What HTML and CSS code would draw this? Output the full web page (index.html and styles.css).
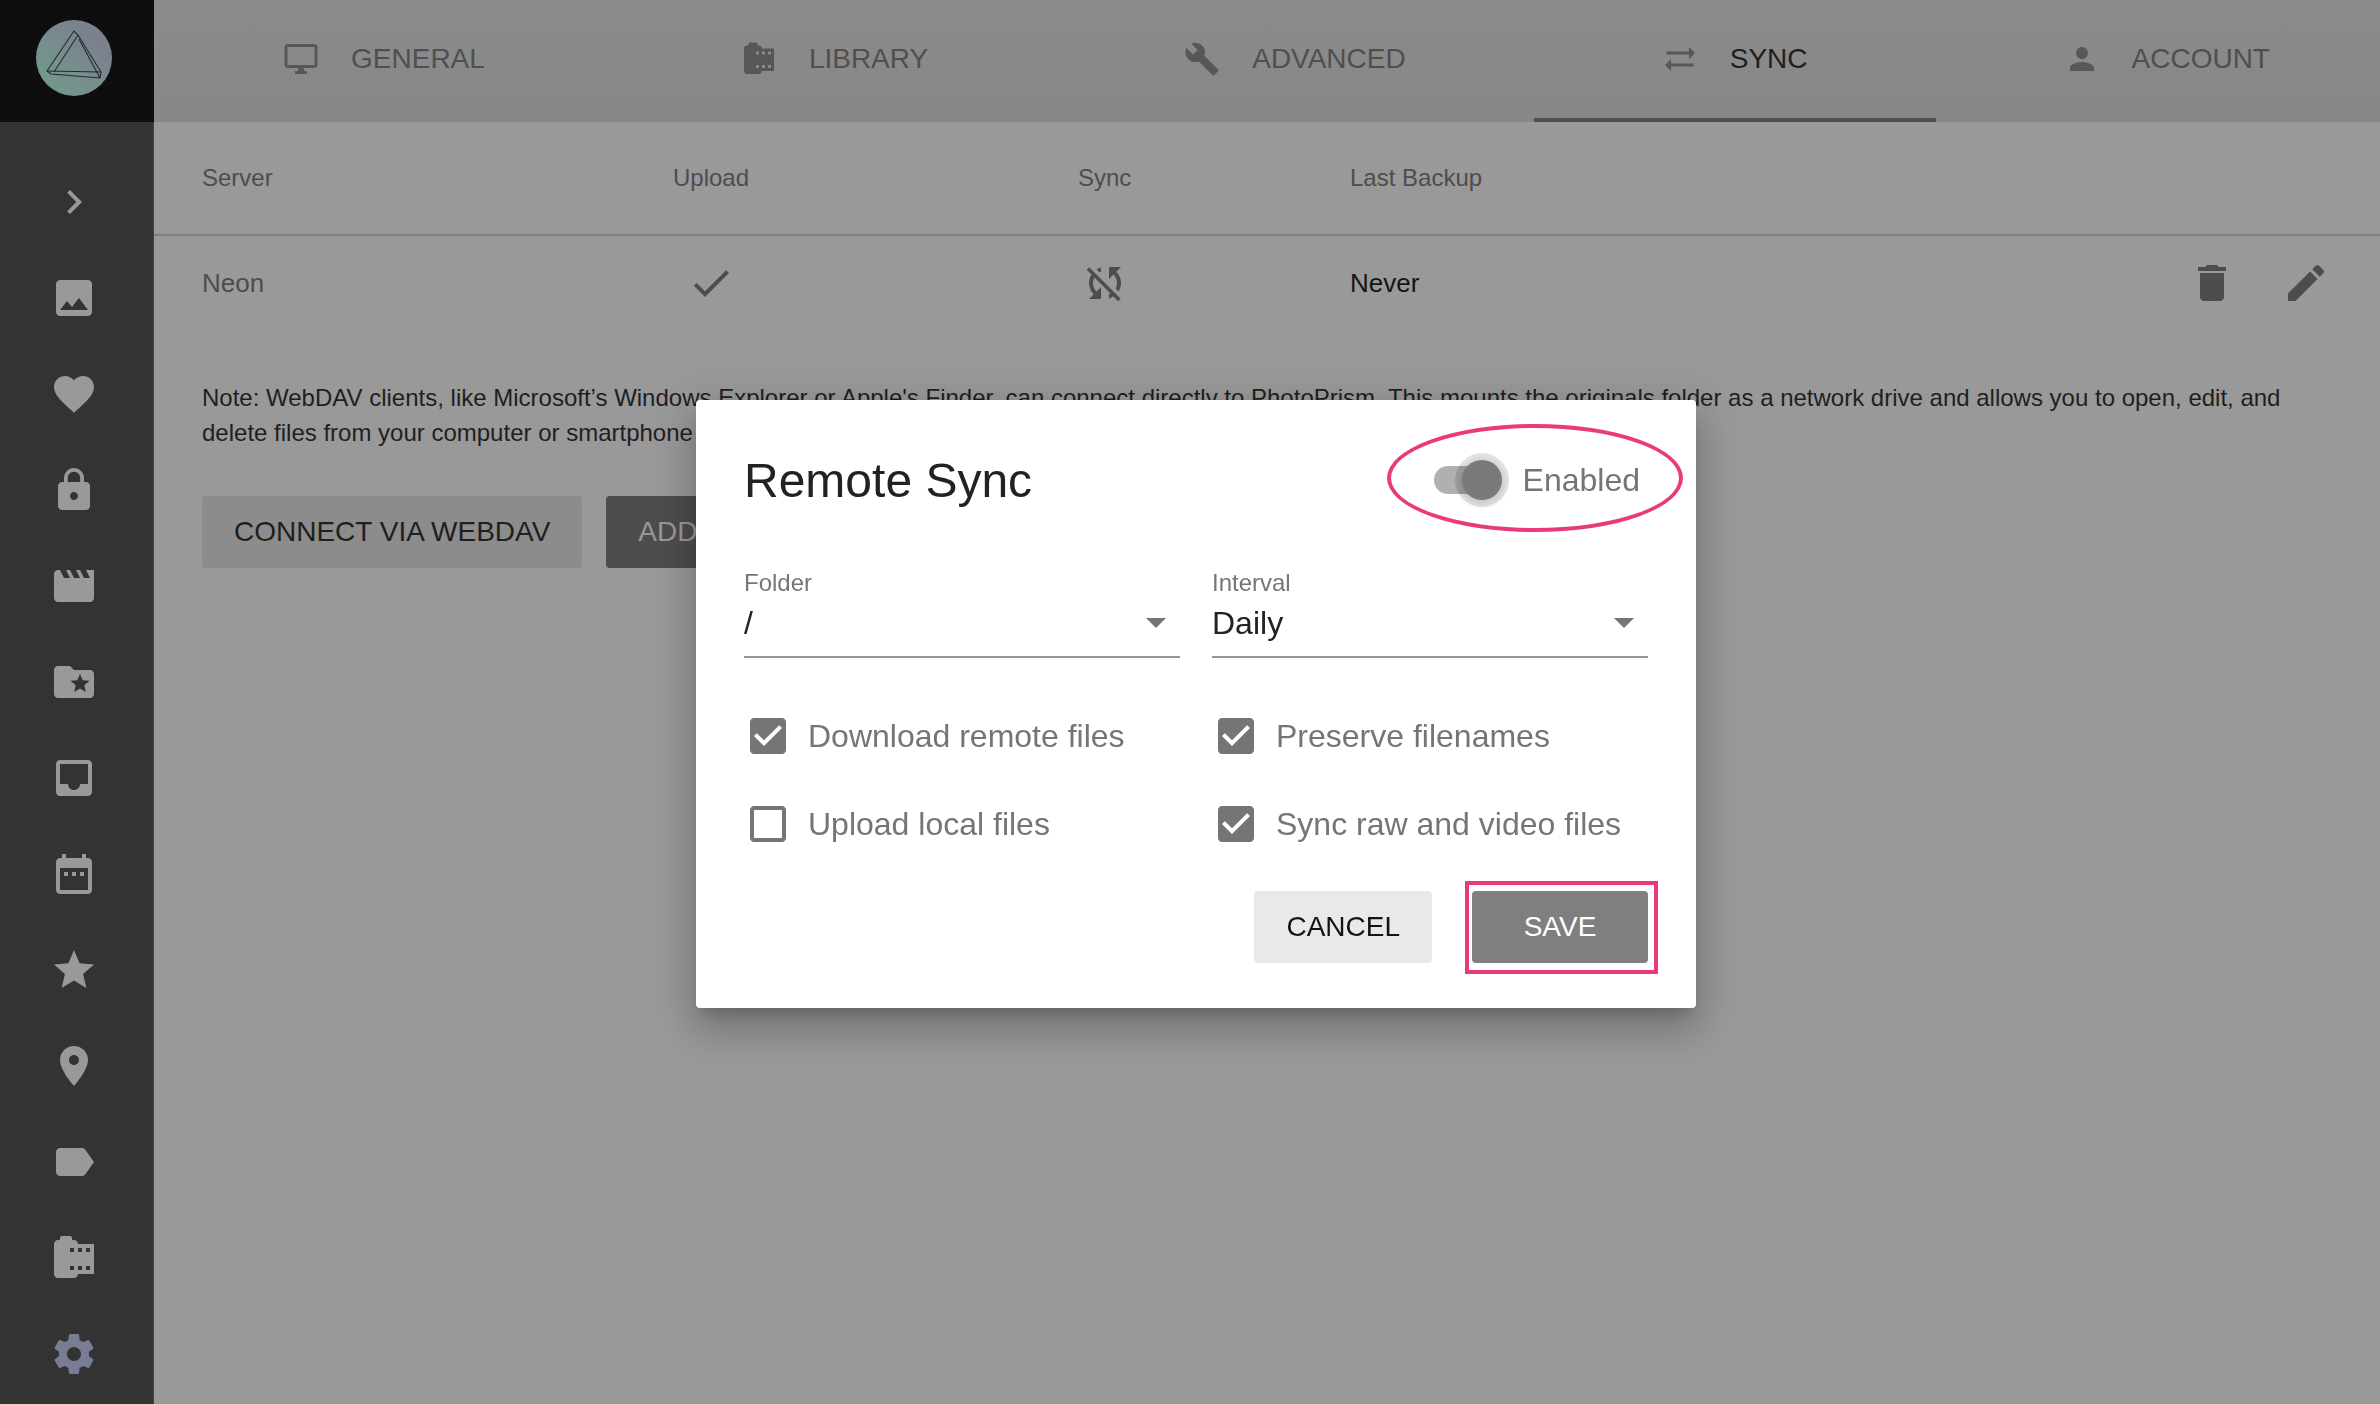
FILE: index.html
```html
<!DOCTYPE html>
<html lang="en">
<head>
  <meta charset="UTF-8" />
  <title>PhotoPrism Sync Settings</title>
  <link rel="stylesheet" href="styles.css">
</head>
<body>
  <svg class="defs" width="0" height="0">
    <symbol id="i-chevron" viewBox="0 0 24 24"><path d="M10 6L8.59 7.41 13.17 12l-4.58 4.59L10 18l6-6z"/></symbol>
    <symbol id="i-image" viewBox="0 0 24 24"><path d="M21 19V5c0-1.1-.9-2-2-2H5c-1.1 0-2 .9-2 2v14c0 1.1.9 2 2 2h14c1.1 0 2-.9 2-2zM8.5 13.5l2.5 3.01L14.5 12l4.5 6H5l3.5-4.5z"/></symbol>
    <symbol id="i-heart" viewBox="0 0 24 24"><path d="M12 21.35l-1.45-1.32C5.4 15.36 2 12.28 2 8.5 2 5.42 4.42 3 7.5 3c1.74 0 3.41.81 4.5 2.09C13.09 3.81 14.76 3 16.5 3 19.58 3 22 5.42 22 8.5c0 3.78-3.4 6.86-8.55 11.54L12 21.35z"/></symbol>
    <symbol id="i-lock" viewBox="0 0 24 24"><path d="M18 8h-1V6c0-2.76-2.24-5-5-5S7 3.24 7 6v2H6c-1.1 0-2 .9-2 2v10c0 1.1.9 2 2 2h12c1.1 0 2-.9 2-2V10c0-1.1-.9-2-2-2zm-6 9c-1.1 0-2-.9-2-2s.9-2 2-2 2 .9 2 2-.9 2-2 2zm3.1-9H8.9V6c0-1.71 1.39-3.1 3.1-3.1 1.71 0 3.1 1.39 3.1 3.1v2z"/></symbol>
    <symbol id="i-movie" viewBox="0 0 24 24"><path d="M18 4l2 4h-3l-2-4h-2l2 4h-3l-2-4H8l2 4H7L5 4H4c-1.1 0-1.99.9-1.99 2L2 18c0 1.1.9 2 2 2h16c1.1 0 2-.9 2-2V4h-4z"/></symbol>
    <symbol id="i-folder" viewBox="0 0 24 24"><path d="M20 6h-8l-2-2H4c-1.1 0-1.99.9-1.99 2L2 18c0 1.1.9 2 2 2h16c1.1 0 2-.9 2-2V8c0-1.1-.9-2-2-2zm-2.06 11L15 15.28 12.06 17l.78-3.33-2.59-2.24 3.41-.29L15 8l1.34 3.14 3.41.29-2.59 2.24.78 3.33z"/></symbol>
    <symbol id="i-inbox" viewBox="0 0 24 24"><path d="M19 3H4.99c-1.11 0-1.98.89-1.98 2L3 19c0 1.1.88 2 1.99 2H19c1.1 0 2-.9 2-2V5c0-1.11-.9-2-2-2zm0 12h-4c0 1.66-1.35 3-3 3s-3-1.34-3-3H4.99V5H19v10z"/></symbol>
    <symbol id="i-date" viewBox="0 0 24 24"><path d="M9 11H7v2h2v-2zm4 0h-2v2h2v-2zm4 0h-2v2h2v-2zm2-7h-1V2h-2v2H8V2H6v2H5c-1.11 0-1.99.9-1.99 2L3 20c0 1.1.89 2 2 2h14c1.1 0 2-.9 2-2V6c0-1.1-.9-2-2-2zm0 16H5V9h14v11z"/></symbol>
    <symbol id="i-star" viewBox="0 0 24 24"><path d="M12 17.27L18.18 21l-1.64-7.03L22 9.24l-7.19-.61L12 2 9.19 8.63 2 9.24l5.46 4.73L5.82 21z"/></symbol>
    <symbol id="i-place" viewBox="0 0 24 24"><path d="M12 2C8.13 2 5 5.13 5 9c0 5.25 7 13 7 13s7-7.75 7-13c0-3.87-3.13-7-7-7zm0 9.5c-1.38 0-2.5-1.12-2.5-2.5s1.12-2.5 2.5-2.5 2.5 1.12 2.5 2.5-1.12 2.5-2.5 2.5z"/></symbol>
    <symbol id="i-label" viewBox="0 0 24 24"><path d="M17.63 5.84C17.27 5.33 16.67 5 16 5L5 5.01C3.9 5.01 3 5.9 3 7v10c0 1.1.9 1.99 2 1.99L16 19c.67 0 1.27-.33 1.63-.84L22 12l-4.37-6.16z"/></symbol>
    <symbol id="i-roll" viewBox="0 0 24 24"><path d="M14 5c0-1.1-.9-2-2-2h-1V2c0-.55-.45-1-1-1H6c-.55 0-1 .45-1 1v1H4c-1.1 0-2 .9-2 2v15c0 1.1.9 2 2 2h8c1.1 0 2-.9 2-2h8V5h-8zm-2 13h-2v-2h2v2zm0-9h-2V7h2v2zm4 9h-2v-2h2v2zm0-9h-2V7h2v2zm4 9h-2v-2h2v2zm0-9h-2V7h2v2z"/></symbol>
    <symbol id="i-settings" viewBox="0 0 24 24"><path d="M19.43 12.98c.04-.32.07-.64.07-.98s-.03-.66-.07-.98l2.11-1.65c.19-.15.24-.42.12-.64l-2-3.46c-.12-.22-.39-.3-.61-.22l-2.49 1c-.52-.4-1.08-.73-1.69-.98l-.38-2.65C14.46 2.18 14.25 2 14 2h-4c-.25 0-.46.18-.49.42l-.38 2.65c-.61.25-1.17.59-1.69.98l-2.49-1c-.23-.09-.49 0-.61.22l-2 3.46c-.13.22-.07.49.12.64l2.11 1.65c-.04.32-.07.65-.07.98s.03.66.07.98l-2.11 1.65c-.19.15-.24.42-.12.64l2 3.46c.12.22.39.3.61.22l2.49-1c.52.4 1.08.73 1.69.98l.38 2.65c.03.24.24.42.49.42h4c.25 0 .46-.18.49-.42l.38-2.65c.61-.25 1.17-.59 1.69-.98l2.49 1c.23.09.49 0 .61-.22l2-3.46c.12-.22.07-.49-.12-.64l-2.11-1.65zM12 15.5c-1.93 0-3.5-1.57-3.5-3.5s1.57-3.5 3.5-3.5 3.5 1.57 3.5 3.5-1.57 3.5-3.5 3.5z"/></symbol>
    <symbol id="i-desktop" viewBox="0 0 24 24"><path d="M21 2H3c-1.1 0-2 .9-2 2v12c0 1.1.9 2 2 2h7v2H8v2h8v-2h-2v-2h7c1.1 0 2-.9 2-2V4c0-1.1-.9-2-2-2zm0 14H3V4h18v12z"/></symbol>
    <symbol id="i-build" viewBox="0 0 24 24"><path d="M22.7 19l-9.1-9.1c.9-2.3.4-5-1.5-6.9-2-2-5-2.4-7.4-1.3L9 6 6 9 1.6 4.7C.4 7.1.9 10.1 2.9 12.1c1.9 1.9 4.6 2.4 6.9 1.5l9.1 9.1c.4.4 1 .4 1.4 0l2.3-2.3c.5-.4.5-1.1.1-1.4z"/></symbol>
    <symbol id="i-syncalt" viewBox="0 0 24 24"><path d="M22 8l-4-4v3H3v2h15v3l4-4zM2 16l4 4v-3h15v-2H6v-3l-4 4z"/></symbol>
    <symbol id="i-person" viewBox="0 0 24 24"><path d="M12 12c2.21 0 4-1.79 4-4s-1.79-4-4-4-4 1.79-4 4 1.79 4 4 4zm0 2c-2.67 0-8 1.34-8 4v2h16v-2c0-2.66-5.33-4-8-4z"/></symbol>
    <symbol id="i-check" viewBox="0 0 24 24"><path d="M9 16.17L4.83 12l-1.42 1.41L9 19 21 7l-1.41-1.41z"/></symbol>
    <symbol id="i-syncoff" viewBox="0 0 24 24"><path d="M10 6.35V4.26c-.8.21-1.55.54-2.23.96l1.46 1.46c.25-.12.5-.24.77-.33zm-7.14-.94l2.36 2.36C4.45 8.99 4 10.44 4 12c0 2.21.91 4.2 2.36 5.64L4 20h6v-6l-2.24 2.24C6.68 15.15 6 13.66 6 12c0-1 .25-1.94.68-2.77l8.08 8.08c-.25.13-.5.25-.77.34v2.09c.8-.21 1.55-.54 2.23-.96l2.36 2.36 1.27-1.27L4.14 4.14 2.86 5.41zM20 4h-6v6l2.24-2.24C17.32 8.85 18 10.34 18 12c0 1-.25 1.94-.68 2.77l1.46 1.46C19.55 15.01 20 13.56 20 12c0-2.21-.91-4.2-2.36-5.64L20 4z"/></symbol>
    <symbol id="i-delete" viewBox="0 0 24 24"><path d="M6 19c0 1.1.9 2 2 2h8c1.1 0 2-.9 2-2V7H6v12zM19 4h-3.5l-1-1h-5l-1 1H5v2h14V4z"/></symbol>
    <symbol id="i-edit" viewBox="0 0 24 24"><path d="M3 17.25V21h3.75L17.81 9.94l-3.75-3.75L3 17.25zM20.71 7.04c.39-.39.39-1.02 0-1.41l-2.34-2.34c-.39-.39-1.02-.39-1.41 0l-1.83 1.83 3.75 3.75 1.83-1.83z"/></symbol>
    <symbol id="i-boxon" viewBox="0 0 24 24"><path d="M19 3H5c-1.11 0-2 .9-2 2v14c0 1.1.89 2 2 2h14c1.11 0 2-.9 2-2V5c0-1.1-.89-2-2-2zm-9 14l-5-5 1.41-1.41L10 14.17l7.59-7.59L19 8l-9 9z"/></symbol>
    <symbol id="i-boxoff" viewBox="0 0 24 24"><path d="M19 5v14H5V5h14m0-2H5c-1.1 0-2 .9-2 2v14c0 1.1.9 2 2 2h14c1.1 0 2-.9 2-2V5c0-1.1-.9-2-2-2z"/></symbol>
  </svg>

  <div class="app">
    <aside class="sidebar">
      <div class="logo">
        <svg class="logo-mark" viewBox="0 0 76 76">
          <defs>
            <linearGradient id="logoFill" x1="0" y1="1" x2="1" y2="0">
              <stop offset="0" stop-color="#6f9e8c"/>
              <stop offset="1" stop-color="#80788f"/>
            </linearGradient>
          </defs>
          <circle cx="38" cy="38" r="38" fill="url(#logoFill)"/>
          <g fill="none" stroke="#26282a" stroke-width="1.1">
            <path d="M38 11L11 51l4 3 49 4 1-6-23-37z"/>
            <path d="M42 15L18 52"/>
            <path d="M11 51l54 1"/>
            <path d="M43 19l21 39"/>
          </g>
        </svg>
      </div>
      <nav class="menu">
        <a class="menu-item"><svg class="icon"><use href="#i-chevron"/></svg></a>
        <a class="menu-item"><svg class="icon"><use href="#i-image"/></svg></a>
        <a class="menu-item"><svg class="icon"><use href="#i-heart"/></svg></a>
        <a class="menu-item"><svg class="icon"><use href="#i-lock"/></svg></a>
        <a class="menu-item"><svg class="icon"><use href="#i-movie"/></svg></a>
        <a class="menu-item"><svg class="icon"><use href="#i-folder"/></svg></a>
        <a class="menu-item"><svg class="icon"><use href="#i-inbox"/></svg></a>
        <a class="menu-item"><svg class="icon"><use href="#i-date"/></svg></a>
        <a class="menu-item"><svg class="icon"><use href="#i-star"/></svg></a>
        <a class="menu-item"><svg class="icon"><use href="#i-place"/></svg></a>
        <a class="menu-item"><svg class="icon"><use href="#i-label"/></svg></a>
        <a class="menu-item"><svg class="icon"><use href="#i-roll"/></svg></a>
        <a class="menu-item active"><svg class="icon"><use href="#i-settings"/></svg></a>
      </nav>
    </aside>

    <main class="main">
      <div class="tabs">
        <a class="tab"><svg class="tab-icon"><use href="#i-desktop"/></svg>General</a>
        <a class="tab"><svg class="tab-icon"><use href="#i-roll"/></svg>Library</a>
        <a class="tab"><svg class="tab-icon"><use href="#i-build"/></svg>Advanced</a>
        <a class="tab active"><svg class="tab-icon"><use href="#i-syncalt"/></svg>Sync</a>
        <a class="tab"><svg class="tab-icon"><use href="#i-person"/></svg>Account</a>
      </div>

      <div class="table">
        <div class="row head">
          <div class="col-server">Server</div>
          <div class="col-upload">Upload</div>
          <div class="col-sync">Sync</div>
          <div class="col-last">Last Backup</div>
        </div>
        <div class="row body">
          <div class="col-server">Neon</div>
          <div class="col-upload"><svg class="icon dim"><use href="#i-check"/></svg></div>
          <div class="col-sync"><svg class="icon dim"><use href="#i-syncoff"/></svg></div>
          <div class="col-last never">Never</div>
          <div class="col-actions">
            <svg class="icon dim"><use href="#i-delete"/></svg>
            <svg class="icon dim"><use href="#i-edit"/></svg>
          </div>
        </div>
      </div>

      <p class="note">Note: WebDAV clients, like Microsoft’s Windows Explorer or Apple's Finder, can connect directly to PhotoPrism. This mounts the originals folder as a network drive and allows you to open, edit, and delete files from your computer or smartphone as if they were local.</p>

      <div class="page-actions">
        <button class="btn btn-grey">Connect via WebDAV</button>
        <button class="btn btn-dark">Add Server</button>
      </div>
    </main>
  </div>

  <div class="overlay">
    <div class="dialog">
      <div class="dialog-head">
        <h2>Remote Sync</h2>
        <div class="toggle-wrap">
          <span class="toggle"><span class="track"></span><span class="thumb"></span></span>
          <span class="toggle-label">Enabled</span>
        </div>
      </div>

      <div class="fields">
        <div class="field">
          <label>Folder</label>
          <div class="select"><span>/</span><i class="caret"></i></div>
        </div>
        <div class="field">
          <label>Interval</label>
          <div class="select"><span>Daily</span><i class="caret"></i></div>
        </div>
      </div>

      <div class="checks">
        <div class="check"><svg class="icon"><use href="#i-boxon"/></svg>Download remote files</div>
        <div class="check"><svg class="icon"><use href="#i-boxon"/></svg>Preserve filenames</div>
        <div class="check"><svg class="icon"><use href="#i-boxoff"/></svg>Upload local files</div>
        <div class="check"><svg class="icon"><use href="#i-boxon"/></svg>Sync raw and video files</div>
      </div>

      <div class="dialog-actions">
        <button class="btn btn-light">Cancel</button>
        <button class="btn btn-save">Save</button>
      </div>
    </div>
  </div>
</body>
</html>
```

FILE: styles.css
```css
html, body {
  margin: 0;
  padding: 0;
  height: 100%;
}
body {
  font-family: "Liberation Sans", Arial, sans-serif;
  background: #999;
  overflow: hidden;
}
.defs {
  position: absolute;
}
.icon {
  width: 48px;
  height: 48px;
  fill: currentColor;
  display: block;
}

/* app shell */
.app {
  display: flex;
  height: 1404px;
}
.sidebar {
  width: 153px;
  flex-shrink: 0;
  background: #333;
  color: #999;
  border-right: 1px solid #414141;
}
.logo {
  height: 122px;
  background: #0e0e0e;
  display: flex;
  align-items: center;
  justify-content: center;
  padding: 0 6px 6px 0;
  box-sizing: border-box;
  margin-right: -1px;
}
.logo-mark {
  width: 76px;
  height: 76px;
}
.menu {
  padding-top: 32px;
}
.menu-item {
  height: 96px;
  display: flex;
  align-items: center;
  justify-content: center;
  padding-right: 5px;
}
.menu-item.active {
  color: #797d93;
}

/* tabs */
.main {
  flex: 1;
  min-width: 0;
  overflow: hidden;
}
.tabs {
  height: 122px;
  background: linear-gradient(#8b8b8b, #878787);
  display: flex;
  justify-content: center;
  padding-left: 19px;
}
.tab {
  flex-shrink: 0;
  display: flex;
  align-items: center;
  box-sizing: border-box;
  padding: 0 128px 5px;
  font-size: 28px;
  text-transform: uppercase;
  color: #4f4f4f;
  white-space: nowrap;
}
.tab.active {
  color: #1f1f1f;
  border-bottom: 4px solid #4f4f4f;
  padding-bottom: 1px;
}
.tab-icon {
  width: 36px;
  height: 36px;
  fill: #575757;
  margin-right: 32px;
}

/* server table */
.row {
  display: flex;
  align-items: center;
  padding-left: 48px;
  position: relative;
}
.head {
  height: 112px;
  font-size: 24px;
  color: #4d4d4d;
  border-bottom: 2px solid #808080;
}
.body {
  height: 94px;
  font-size: 26px;
  color: #4d4d4d;
}
.col-server { width: 471px; }
.col-upload { width: 405px; }
.col-sync { width: 272px; }
.col-last { flex: 1; }
.never { color: #141414; }
.body .col-upload .icon { margin-left: 14px; }
.body .col-sync .icon { margin-left: 3px; }
.dim { color: #4d4d4d; }
.col-actions {
  display: flex;
  gap: 46px;
  padding-right: 50px;
}

.note {
  margin: 50px 48px 0;
  font-size: 24px;
  line-height: 35px;
  color: #1f1f1f;
}
.page-actions {
  margin: 46px 48px 0;
  display: flex;
  gap: 24px;
}

/* buttons */
.btn {
  height: 72px;
  padding: 0 32px;
  border: 0;
  border-radius: 4px;
  font-family: inherit;
  font-size: 28px;
  text-transform: uppercase;
}
.btn-grey {
  background: #8c8c8c;
  color: #1f1f1f;
}
.btn-dark {
  background: #4d4d4d;
  color: #999;
}
.btn-light {
  background: #e9e9e9;
  color: #141414;
}
.btn-save {
  min-width: 176px;
  background: #7f7f7f;
  color: #fff;
  position: relative;
}
.btn-save::after {
  content: "";
  position: absolute;
  top: -10px;
  right: -10px;
  bottom: -11px;
  left: -7px;
  border: 4px solid #e83a7c;
}

/* dialog */
.overlay {
  position: fixed;
  top: 0;
  left: 0;
  right: 0;
  bottom: 0;
  display: flex;
  align-items: center;
  justify-content: center;
  padding: 4px 0 0 12px;
  box-sizing: border-box;
}
.dialog {
  width: 1000px;
  height: 608px;
  box-sizing: border-box;
  padding: 0 48px;
  background: #fff;
  border-radius: 4px;
  box-shadow: 0 11px 15px -7px rgba(0,0,0,0.2), 0 24px 38px 3px rgba(0,0,0,0.14), 0 9px 46px 8px rgba(0,0,0,0.12);
}
.dialog-head {
  height: 169px;
  padding-bottom: 9px;
  box-sizing: border-box;
  display: flex;
  align-items: center;
  justify-content: space-between;
}
.dialog-head h2 {
  margin: 0;
  font-size: 48px;
  font-weight: 400;
  color: #222;
}
.toggle-wrap {
  display: flex;
  align-items: center;
  position: relative;
  margin-right: 8px;
}
.toggle-wrap::after {
  content: "";
  position: absolute;
  top: -29px;
  left: -46px;
  width: 296px;
  height: 108px;
  box-sizing: border-box;
  border: 4px solid #e83a7c;
  border-radius: 50%;
}
.toggle {
  width: 68px;
  height: 54px;
  position: relative;
  margin-right: 22px;
}
.track {
  position: absolute;
  left: 1px;
  top: 13px;
  width: 64px;
  height: 28px;
  border-radius: 14px;
  background: #b0b0b0;
}
.thumb {
  position: absolute;
  right: -1px;
  top: 7px;
  width: 40px;
  height: 40px;
  border-radius: 50%;
  background: #7a7a7a;
  box-shadow: 0 0 0 7px rgba(0,0,0,0.1), 0 2px 6px 3px rgba(0,0,0,0.12);
}
.toggle-label {
  font-size: 32px;
  color: #757575;
}

.fields {
  display: grid;
  grid-template-columns: 436px 436px;
  gap: 32px;
}
.field label {
  display: block;
  font-size: 24px;
  line-height: 28px;
  color: #767676;
}
.select {
  height: 61px;
  box-sizing: border-box;
  padding-bottom: 7px;
  border-bottom: 2px solid #949494;
  display: flex;
  align-items: center;
  justify-content: space-between;
  font-size: 32px;
  color: #222;
}
.caret {
  width: 0;
  height: 0;
  margin-right: 14px;
  border-left: 10px solid transparent;
  border-right: 10px solid transparent;
  border-top: 10px solid #757575;
}

.checks {
  display: grid;
  grid-template-columns: 436px 436px;
  column-gap: 32px;
  row-gap: 40px;
  margin-top: 54px;
}
.check {
  display: flex;
  align-items: center;
  font-size: 32px;
  color: #757575;
}
.check .icon {
  margin-right: 16px;
}

.dialog-actions {
  display: flex;
  justify-content: flex-end;
  gap: 40px;
  margin-top: 43px;
}
```
